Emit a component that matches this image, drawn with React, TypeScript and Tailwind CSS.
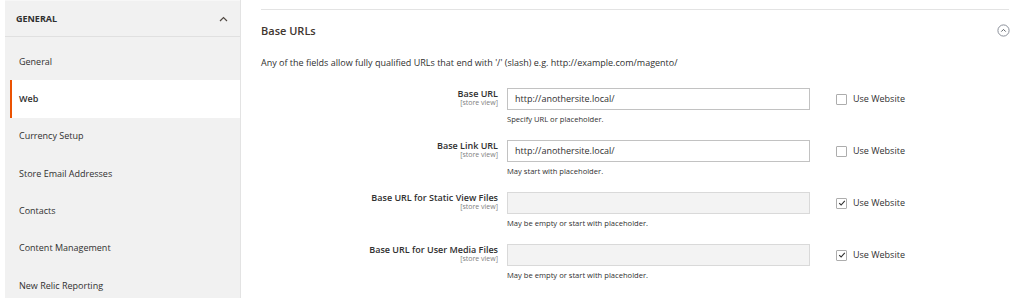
import React from "react";

const items = [
  "General",
  "Web",
  "Currency Setup",
  "Store Email Addresses",
  "Contacts",
  "Content Management",
  "New Relic Reporting",
];

type Row = {
  label: string;
  value: string;
  note: string;
  disabled: boolean;
};

const rows: Row[] = [
  { label: "Base URL", value: "http://anothersite.local/", note: "Specify URL or placeholder.", disabled: false },
  { label: "Base Link URL", value: "http://anothersite.local/", note: "May start with placeholder.", disabled: false },
  { label: "Base URL for Static View Files", value: "", note: "May be empty or start with placeholder.", disabled: true },
  { label: "Base URL for User Media Files", value: "", note: "May be empty or start with placeholder.", disabled: true },
];

function Checkbox({ checked }: { checked: boolean }) {
  return (
    <div className="w-[11px] h-[11px] border border-[#adadad] rounded-[1px] bg-white flex items-center justify-center">
      {checked && (
        <svg width="8" height="8" viewBox="0 0 8 8">
          <path d="M1.2 4.2 L3.1 6 L6.8 1.8" fill="none" stroke="#303030" strokeWidth="1.1" />
        </svg>
      )}
    </div>
  );
}

export default function App() {
  return (
    <div
      className="w-[1024px] h-[298px] bg-white flex overflow-hidden text-[#303030]"
      style={{ fontFamily: '"Open Sans", "Noto Sans", sans-serif' }}
    >
      <div className="ml-[5px] w-[236px] shrink-0 bg-[#f1f1f1] border-r border-[#e3e3e3] flex flex-col">
        <div className="h-[37px] shrink-0 border-b border-[#e0e0e0] border-t border-t-[#f7f7f7] flex items-center justify-between pl-[11px] pr-[12px]">
          <span className="text-[9px] font-bold uppercase tracking-[0px] text-[#303030]">General</span>
          <svg width="9" height="6" viewBox="0 0 9 6">
            <path d="M1 5 L4.5 1.5 L8 5" fill="none" stroke="#514943" strokeWidth="1.2" />
          </svg>
        </div>
        <div className="mt-[6px] flex flex-col">
          {items.map((it) => {
            const active = it === "Web";
            return (
              <div
                key={it}
                className={
                  active
                    ? "ml-[5px] h-[37.3px] shrink-0 bg-white border-l-2 border-[#eb5202] flex items-center pl-[7px] text-[9px] font-semibold text-[#303030]"
                    : "ml-[5px] h-[37.3px] shrink-0 flex items-center pl-[9px] text-[9px] text-[#303030]"
                }
              >
                {it}
              </div>
            );
          })}
        </div>
      </div>

      <div className="flex-1 pl-[20px] pr-[15px]">
        <div className="mt-[9px] border-t border-[#e3e3e3]" />
        <div className="mt-[13px] h-[15px] flex items-center justify-between">
          <span className="text-[11px] font-semibold text-[#41362f] leading-[15px]">Base URLs</span>
          <svg width="13" height="13" viewBox="0 0 13 13" className="mr-[-1px]">
            <circle cx="6.5" cy="6.5" r="5.6" fill="none" stroke="#8a8f99" strokeWidth="1" />
            <path d="M4.3 7.6 L6.5 5.4 L8.7 7.6" fill="none" stroke="#5a5f66" strokeWidth="1" />
          </svg>
        </div>
        <div className="mt-[19px] text-[9px] leading-[12px] text-[#303030]">
          Any of the fields allow fully qualified URLs that end with '/' (slash) e.g. http://example.com/magento/
        </div>
        <div className="mt-[19px] flex flex-col">
          {rows.map((r) => (
            <div key={r.label} className="h-[52px] flex items-start">
              <div className="w-[237px] shrink-0 text-right">
                <div className="text-[9px] font-semibold leading-[11px] text-[#303030]">{r.label}</div>
                <div className="text-[7px] leading-[8px] text-[#808080]">[store view]</div>
              </div>
              <div className="ml-[9px] w-[303px] shrink-0">
                <div
                  className={
                    r.disabled
                      ? "h-[22px] border border-[#d9d9d9] bg-[#f3f3f3]"
                      : "h-[22px] border border-[#c2c2c2] bg-white flex items-center pl-[7px] text-[9px] text-[#303030]"
                  }
                >
                  {r.value}
                </div>
                <div className="mt-[4px] text-[7.6px] leading-[10px] text-[#303030]">{r.note}</div>
              </div>
              <div className="ml-[26px] h-[22px] flex items-center gap-[6px]">
                <Checkbox checked={r.disabled} />
                <span className="text-[9px] text-[#303030]">Use Website</span>
              </div>
            </div>
          ))}
        </div>
      </div>
    </div>
  );
}
